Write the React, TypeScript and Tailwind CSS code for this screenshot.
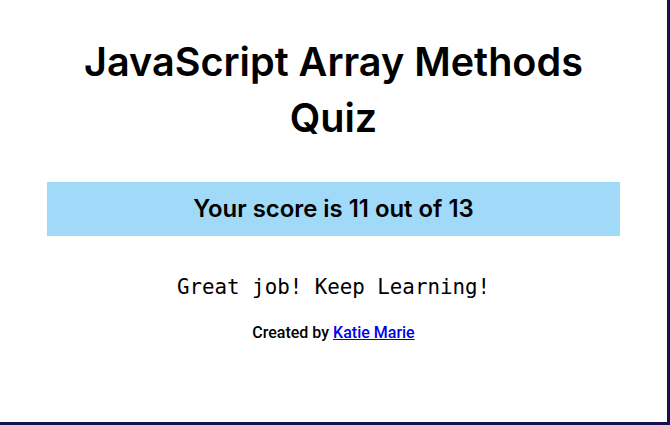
export default function App() {
  return (
    <div className="h-[425px] w-[670px] bg-white">
      <div className="flex h-full w-full flex-col items-center border-r-[3px] border-b-[3px] border-[#15124e] px-[47px]">
        <h1 className="mt-[34px] text-center font-['Inter',sans-serif] text-[39.6px] leading-[56px] font-semibold text-black">
          JavaScript Array Methods
          <br />
          Quiz
        </h1>
        <div className="mt-[36px] flex h-[54px] w-full items-center justify-center bg-[#a0daf8]">
          <h2 className="font-['Inter',sans-serif] text-[23.9px] font-semibold text-black">
            Your score is 11 out of 13
          </h2>
        </div>
        <p className="mt-[37px] font-['DejaVu_Sans_Mono',monospace] text-[20.8px] leading-[28px] text-black">
          Great job! Keep Learning!
        </p>
        <p className="mt-[21px] font-['Roboto',sans-serif] text-[16px] leading-[22px] font-medium text-black">
          Created by{" "}
          <a href="#" className="text-[#0000ee] underline">
            Katie Marie
          </a>
        </p>
      </div>
    </div>
  );
}
